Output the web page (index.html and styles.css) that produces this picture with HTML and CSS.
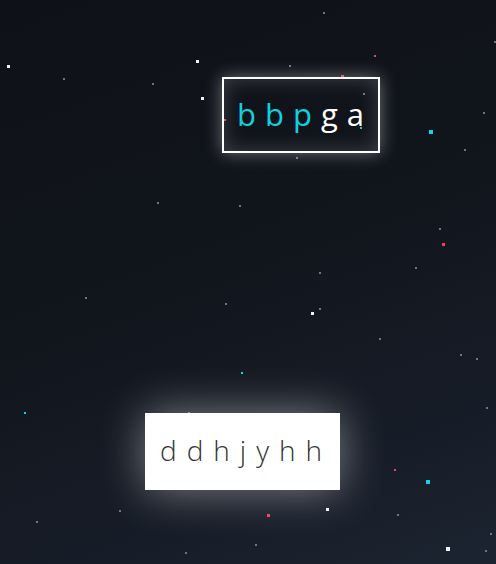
FILE: index.html
```html
<!DOCTYPE html>
<html>
<head>
<meta charset="utf-8">
<link rel="stylesheet" href="styles.css">
</head>
<body>
<div class="sky">
  <div class="stars">
    <i class="s w m" style="left:7px;top:65px"></i>
    <i class="s g" style="left:63px;top:78px"></i>
    <i class="s g" style="left:152px;top:83px"></i>
    <i class="s w m" style="left:196px;top:60px"></i>
    <i class="s w m" style="left:201px;top:97px"></i>
    <i class="s r" style="left:224px;top:119px"></i>
    <i class="s g" style="left:157px;top:202px"></i>
    <i class="s g" style="left:239px;top:205px"></i>
    <i class="s g" style="left:323px;top:12px"></i>
    <i class="s r" style="left:374px;top:55px"></i>
    <i class="s g" style="left:289px;top:65px"></i>
    <i class="s r m" style="left:341px;top:75px"></i>
    <i class="s g" style="left:363px;top:93px"></i>
    <i class="s c" style="left:360px;top:127px"></i>
    <i class="s c l" style="left:429px;top:130px"></i>
    <i class="s g" style="left:483px;top:112px"></i>
    <i class="s g" style="left:494px;top:41px"></i>
    <i class="s g" style="left:464px;top:149px"></i>
    <i class="s g" style="left:296px;top:157px"></i>
    <i class="s g" style="left:439px;top:228px"></i>
    <i class="s r m" style="left:442px;top:243px"></i>
    <i class="s g" style="left:415px;top:267px"></i>
    <i class="s g" style="left:319px;top:272px"></i>
    <i class="s g" style="left:85px;top:297px"></i>
    <i class="s g" style="left:225px;top:303px"></i>
    <i class="s c" style="left:241px;top:372px"></i>
    <i class="s c" style="left:24px;top:412px"></i>
    <i class="s g" style="left:188px;top:412px"></i>
    <i class="s g" style="left:119px;top:510px"></i>
    <i class="s g" style="left:36px;top:521px"></i>
    <i class="s g" style="left:185px;top:552px"></i>
    <i class="s w m" style="left:311px;top:312px"></i>
    <i class="s g" style="left:319px;top:308px"></i>
    <i class="s g" style="left:379px;top:338px"></i>
    <i class="s g" style="left:460px;top:354px"></i>
    <i class="s g" style="left:476px;top:358px"></i>
    <i class="s g" style="left:486px;top:407px"></i>
    <i class="s r" style="left:394px;top:469px"></i>
    <i class="s c l" style="left:426px;top:480px"></i>
    <i class="s w m" style="left:326px;top:508px"></i>
    <i class="s r m" style="left:267px;top:514px"></i>
    <i class="s g" style="left:255px;top:544px"></i>
    <i class="s g" style="left:397px;top:514px"></i>
    <i class="s w l" style="left:446px;top:547px"></i>
    <i class="s g" style="left:490px;top:533px"></i>
    <i class="s g" style="left:485px;top:550px"></i>
  </div>
  <div class="content">
    <div class="frame"><span class="accent">bbp</span>ga</div>
    <div class="card">ddhjyhh</div>
  </div>
</div>
</body>
</html>
```
FILE: styles.css
```css
html, body {
  margin: 0;
  padding: 0;
}
body {
  width: 496px;
  height: 564px;
  overflow: hidden;
  font-family: "Open Sans", "Noto Sans", sans-serif;
}
.sky {
  position: relative;
  width: 496px;
  height: 564px;
  background: linear-gradient(160deg, #0e1117 0%, #11151c 45%, #171d28 80%, #1c2431 100%);
  overflow: hidden;
}
.stars {
  position: absolute;
  inset: 0;
}
.s {
  position: absolute;
  width: 2px;
  height: 2px;
  background: #7a808a;
}
.s.w { background: #f2f2f2; }
.s.r { background: #e8465a; }
.s.c { background: #13d4e4; }
.s.m { width: 3px; height: 3px; }
.s.l { width: 4px; height: 4px; }
.s.g { opacity: 0.9; }
.content {
  position: relative;
  display: flex;
  flex-direction: column;
  align-items: flex-start;
  padding-top: 77px;
}
.frame {
  box-sizing: border-box;
  margin-left: 222px;
  width: 158px;
  height: 76px;
  border: 2px solid #ffffff;
  line-height: 70px;
  padding-left: 13px;
  font-size: 31px;
  letter-spacing: 9px;
  color: #ffffff;
  white-space: nowrap;
  box-shadow: 0 0 16px rgba(255,255,255,0.4), inset 0 0 20px rgba(255,255,255,0.2);
}
.accent {
  color: #10d2de;
}
.card {
  box-sizing: border-box;
  margin-left: 145px;
  margin-top: 260px;
  width: 195px;
  height: 77px;
  background: #ffffff;
  line-height: 74px;
  padding-left: 15px;
  font-size: 28px;
  font-weight: 300;
  letter-spacing: 10px;
  color: #333333;
  white-space: nowrap;
  box-shadow: 0 0 45px rgba(255,255,255,0.45);
}
```
